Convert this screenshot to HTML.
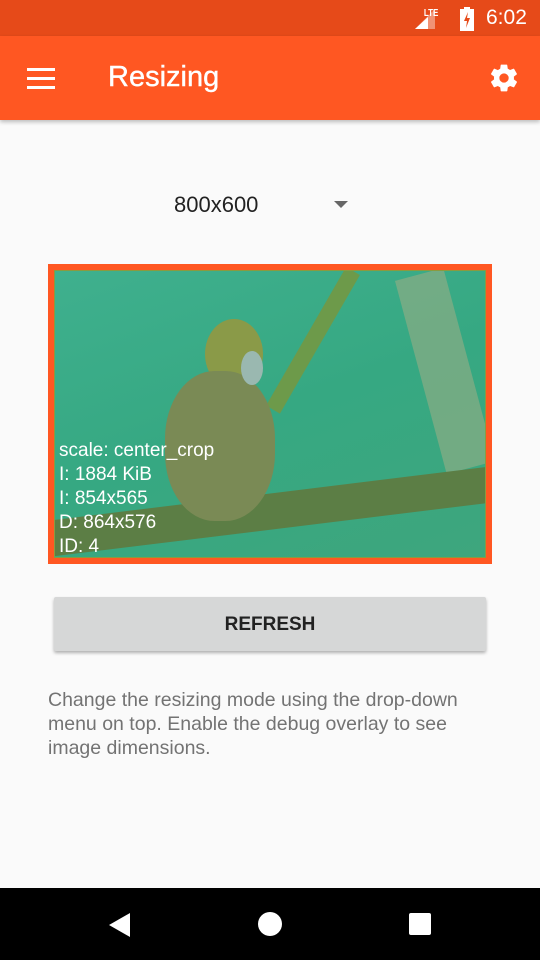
<!DOCTYPE html>
<html><head><meta charset="utf-8"><style>
*{margin:0;padding:0;box-sizing:border-box}
body{width:540px;height:960px;background:#fafafa;font-family:"Liberation Sans",Roboto,sans-serif;position:relative;overflow:hidden}
.sb{position:absolute;top:0;left:0;width:540px;height:36px;background:#e64a19}
.ab{position:absolute;top:36px;left:0;width:540px;height:84px;background:#ff5722;box-shadow:0 2px 4px rgba(0,0,0,.25)}
.t{position:absolute;left:108px;top:62px;font-size:28px;color:#fff}
.nav{position:absolute;bottom:0;left:0;width:540px;height:72px;background:#000}
</style></head><body>
<div class="sb">
<div style="position:absolute;left:422px;top:8px;font-size:10px;font-weight:bold;color:#fff;transform:scaleX(.8)">LTE</div>
<svg style="position:absolute;left:414px;top:8px" width="22" height="22"><polygon points="21,1 21,21 1,21" fill="#fff" opacity=".4"/><polygon points="14,9 14,21 1,21" fill="#fff"/></svg>
<svg style="position:absolute;left:459px;top:7px" width="16" height="24"><rect x="5" y="0" width="6" height="3" fill="#fff"/><rect x="1" y="2" width="14" height="22" fill="#fff"/><path d="M9 5 L5 14 L8 14 L7 21 L11 11 L8 11 Z" fill="#e64a19"/></svg>
<div style="position:absolute;left:486px;top:6px;font-size:21px;color:#fff">6:02</div>
</div>
<div class="ab">
<div style="position:absolute;left:27px;top:32px;width:28px;height:3px;background:#fff;box-shadow:0 9px #fff,0 18px #fff"></div>
<div class="t" style="top:25px;left:108px;font-size:29px;font-weight:500;-webkit-text-stroke:.4px #fff">Resizing</div>
<svg style="position:absolute;left:488px;top:26px" width="32" height="32" viewBox="0 0 24 24"><path fill="#fff" d="M19.4 13c.04-.3.06-.6.06-1s-.02-.7-.06-1l2.1-1.65c.2-.15.25-.42.12-.64l-2-3.46c-.12-.22-.39-.3-.61-.22l-2.49 1c-.52-.4-1.080-.73-1.69-.98l-.38-2.65A.49.49 0 0 0 14 2h-4c-.25 0-.46.18-.49.42l-.38 2.65c-.61.25-1.17.59-1.69.98l-2.49-1c-.23-.09-.49 0-.61.22l-2 3.46c-.13.22-.07.49.12.64L4.57 11c-.04.32-.07.66-.07 1s.03.68.07 1l-2.11 1.65c-.19.15-.24.42-.12.64l2 3.460c.12.22.39.3.61.22l2.49-1c.52.4 1.08.73 1.69.98l.38 2.65c.03.24.24.42.49.42h4c.25 0 .46-.18.49-.42l.38-2.65c.61-.25 1.17-.59 1.69-.98l2.49 1c.23.09.49 0 .61-.22l2-3.46c.12-.22.07-.49-.12-.64L19.4 13zM12 15.5A3.5 3.5 0 1 1 12 8.5a3.5 3.5 0 0 1 0 7z"/></svg>
</div>
<div style="position:absolute;left:174px;top:192px;font-size:22px;color:#222">800x600</div>
<div style="position:absolute;left:334px;top:201px;width:0;height:0;border-left:7px solid transparent;border-right:7px solid transparent;border-top:7px solid #666"></div>
<div style="position:absolute;left:48px;top:264px;width:444px;height:300px;background:#ff5722;padding:6px">
<div style="position:relative;width:432px;height:288px;background:linear-gradient(160deg,#3fb08e 0%,#36a882 50%,#3ea67d 100%);overflow:hidden;border:1px solid #8a9a40">
<div style="position:absolute;top:0;width:16px;height:160px;background:#6d9a4a;transform:rotate(30deg);transform-origin:top;left:290px"></div>
<div style="position:absolute;left:365px;top:0;width:50px;height:200px;background:#8aad85;opacity:.7;transform:rotate(-15deg)"></div>
<div style="position:absolute;top:222px;width:480px;height:36px;background:#5c7e45;transform:rotate(-7deg);border-radius:18px;left:-20px"></div>
<div style="position:absolute;left:150px;top:48px;width:58px;height:70px;border-radius:50%;background:#8a9a48"></div>
<div style="position:absolute;left:110px;top:100px;width:110px;height:150px;border-radius:45%;background:#7a8a55"></div>
<div style="position:absolute;left:186px;top:80px;width:22px;height:34px;border-radius:50%;background:#9ab8b0"></div>
<div style="position:absolute;left:4px;top:168px;font-size:19px;line-height:24px;color:#fff">scale: center_crop<br>I: 1884 KiB<br>I: 854x565<br>D: 864x576<br>ID: 4</div>
</div></div>
<div style="position:absolute;left:54px;top:597px;width:432px;height:54px;background:#d6d7d7;border-radius:2px;box-shadow:0 2px 3px rgba(0,0,0,.3);text-align:center;line-height:56px;font-size:19px;font-weight:bold;color:#222">REFRESH</div>
<div style="position:absolute;left:48px;top:688px;width:445px;font-size:19.5px;line-height:24px;color:#737373">Change the resizing mode using the drop-down menu on top. Enable the debug overlay to see image dimensions.</div>
<div class="nav">
<svg style="position:absolute;left:108px;top:24px" width="24" height="26"><polygon points="22,1 22,25 1,13" fill="#fff"/></svg>
<div style="position:absolute;left:258px;top:24px;width:24px;height:24px;border-radius:50%;background:#fff"></div>
<div style="position:absolute;left:409px;top:25px;width:22px;height:22px;border-radius:2px;background:#fff"></div>
</div>
</body></html>
